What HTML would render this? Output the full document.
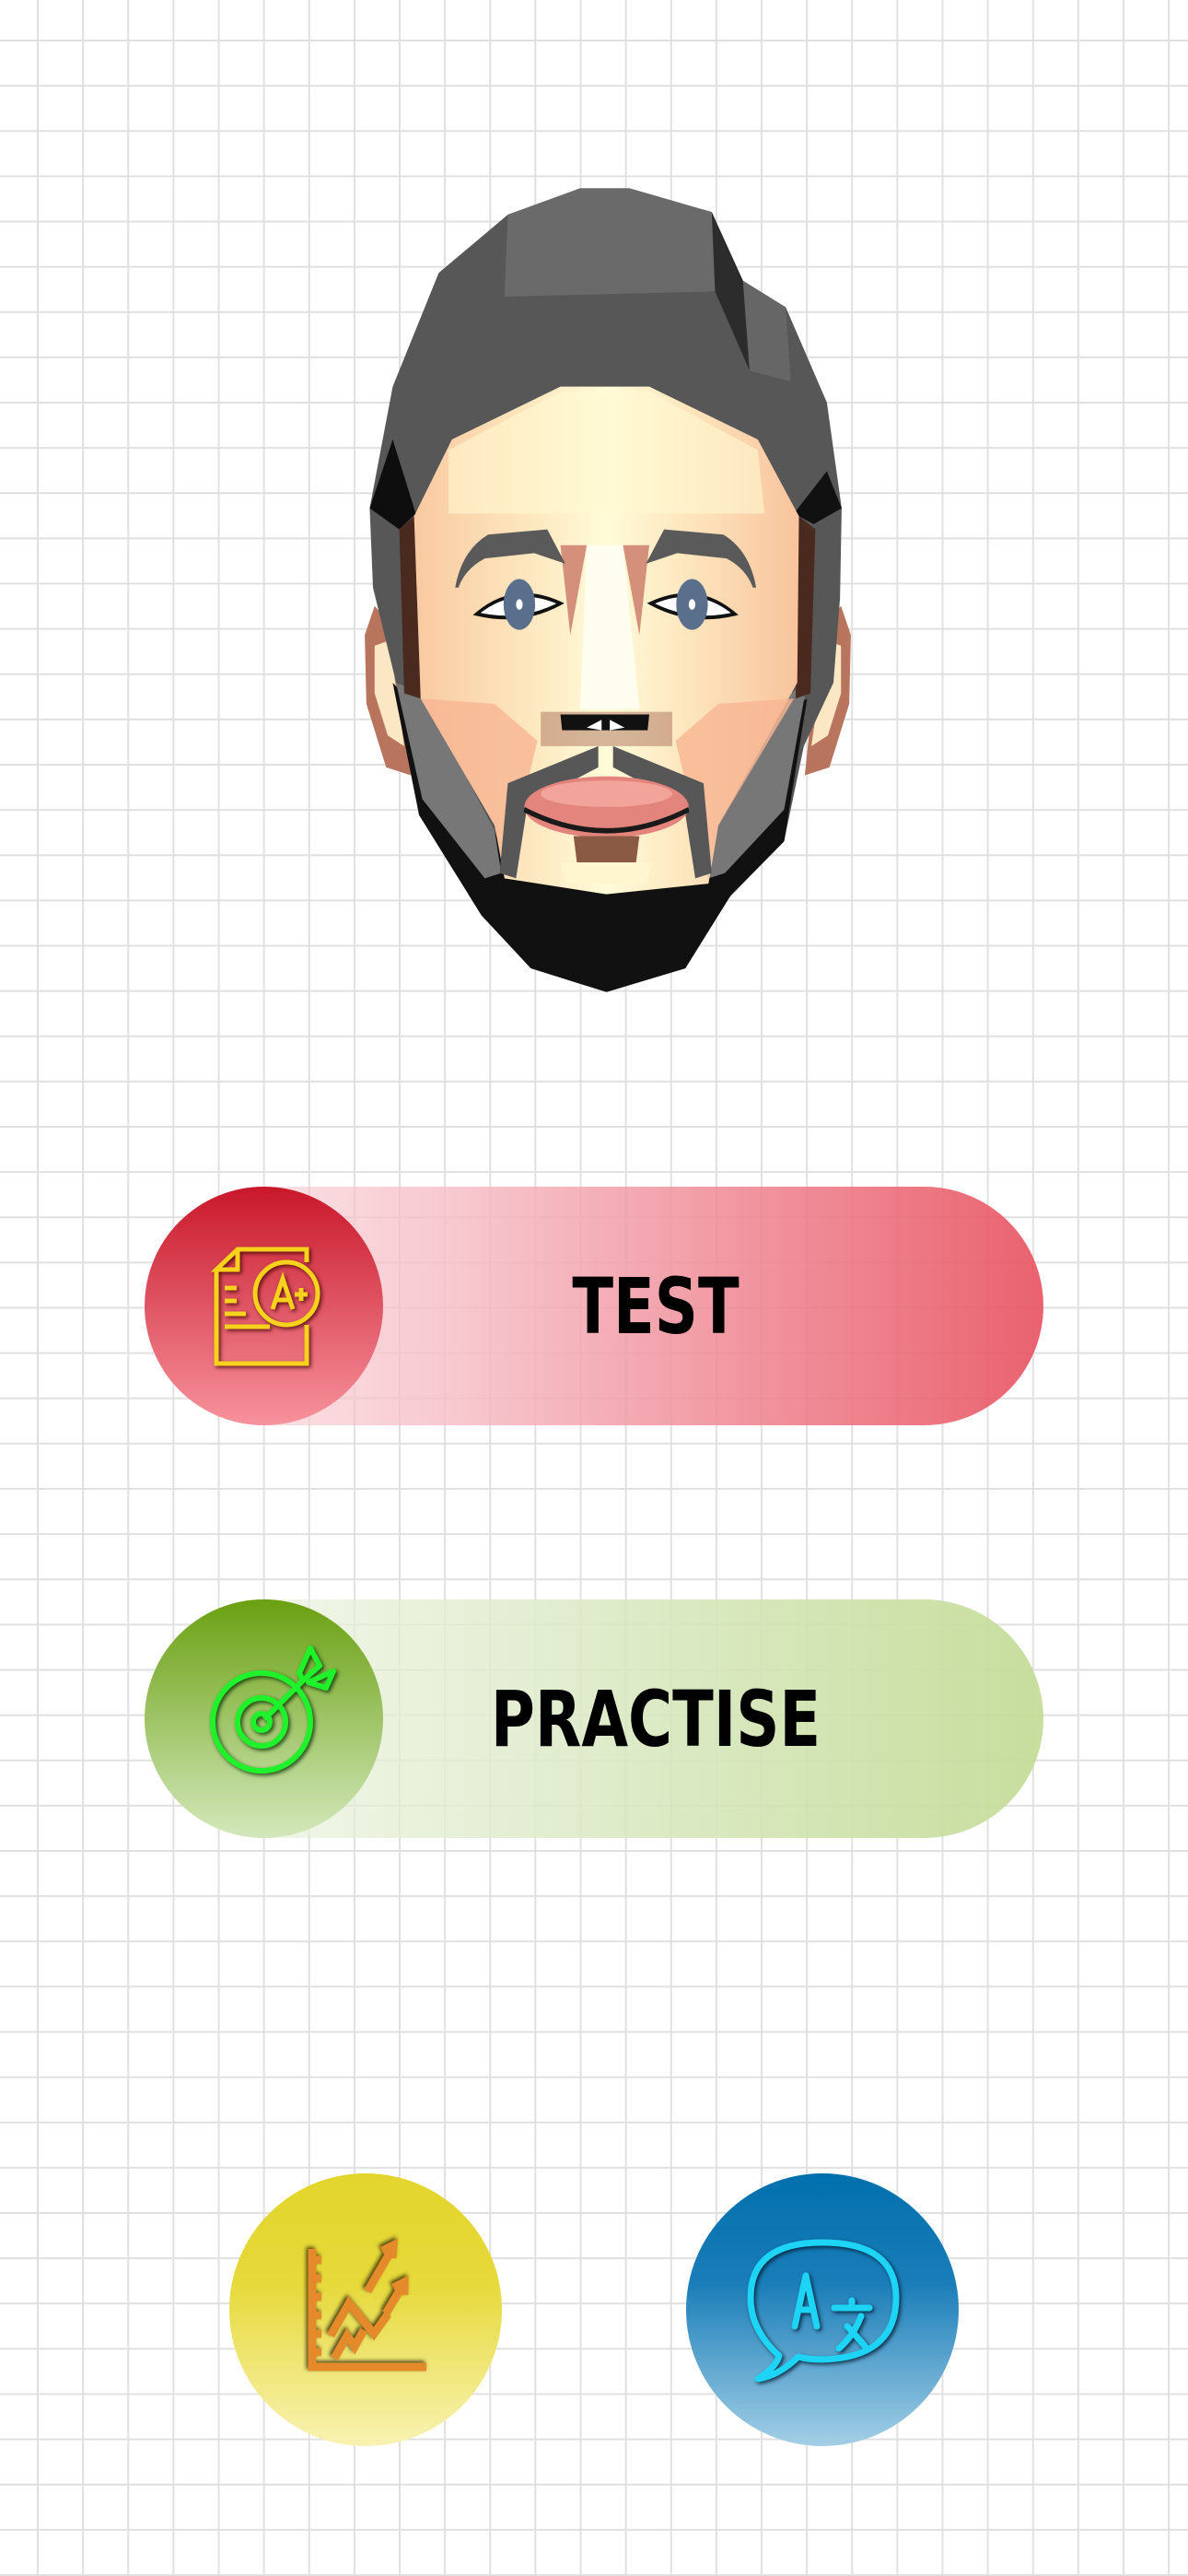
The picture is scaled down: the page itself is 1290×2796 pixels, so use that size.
<!DOCTYPE html>
<html><head><meta charset="utf-8"><style>
html,body{margin:0;padding:0}
body{width:1290px;height:2796px;position:relative;overflow:hidden;background-color:#fff;
background-image:linear-gradient(to right,#e0e0e0 0,#e0e0e0 2px,transparent 2px),linear-gradient(to bottom,#e0e0e0 0,#e0e0e0 2px,transparent 2px);
background-size:49.14px 49.14px;background-position:40px 43px;}
.abs{position:absolute}
.pill{position:absolute;left:157px;width:976px;height:259px;border-radius:130px}
.circ{position:absolute;border-radius:50%}
.lbl{position:absolute;font-family:"DejaVu Sans","Liberation Sans",sans-serif;font-weight:bold;font-size:84px;color:#000;line-height:1;transform:scaleX(0.78);transform-origin:center;white-space:nowrap;text-align:center;width:600px}
</style></head><body>

<svg class="abs" style="left:380px;top:190px" width="560" height="900" viewBox="0 0 1568 1568" preserveAspectRatio="none">
<defs>
<linearGradient id="sk" x1="0" x2="1" y1="0" y2="0">
<stop offset="0" stop-color="#f9c9a0"/><stop offset="0.3" stop-color="#fde7bf"/><stop offset="0.5" stop-color="#fffbd8"/><stop offset="0.7" stop-color="#fde7bf"/><stop offset="1" stop-color="#f8c39c"/></linearGradient>
</defs>
<polygon points="45,870 75,815 140,860 185,1135 110,1120 50,1000" fill="#b8745c"/>
<polygon points="75,890 120,880 165,1080 115,1060 75,980" fill="#fbe7c4"/>
<polygon points="1523,870 1493,815 1428,860 1383,1135 1458,1120 1518,1000" fill="#b8745c"/>
<polygon points="1493,890 1448,880 1403,1080 1453,1060 1493,980" fill="#fbe7c4"/>
<polygon points="270,185 480,75 700,25 850,25 1100,70 1195,200 1325,250 1450,430 1495,630 1490,800 1470,960 1380,1080 1320,1260 1100,1400 1020,1500 780,1545 550,1500 400,1400 210,1210 160,1010 70,780 60,630 130,400" fill="#575757"/>
<polygon points="480,75 700,25 850,25 1100,70 1110,220 470,230" fill="#6a6a6a"/>
<polygon points="1100,70 1195,200 1215,370 1110,220" fill="#2c2c2c"/>
<polygon points="1195,200 1325,250 1340,390 1215,370" fill="#666"/>
<polygon points="60,630 130,500 200,640 150,670" fill="#0e0e0e"/>
<polygon points="1495,630 1450,560 1350,640 1410,660" fill="#111"/>
<polygon points="130,960 210,1210 400,1400 550,1500 780,1545 1020,1500 1160,1360 1320,1260 1390,990 1340,1010 1120,1230 1070,1330 780,1360 490,1330 440,1240 160,980" fill="#111"/>
<polygon points="140,960 220,1180 410,1330 460,1320 440,1240 220,980" fill="#777"/>
<polygon points="1390,960 1320,1200 1140,1320 1090,1330 1120,1230 1340,980" fill="#777"/>
<polygon points="150,670 195,645 215,990 165,980" fill="#4a2a1e"/>
<polygon points="1415,670 1365,645 1355,990 1400,980" fill="#4a2a1e"/>
<polygon points="195,645 310,500 640,400 910,400 1240,500 1365,645 1360,960 1120,1230 1090,1340 780,1360 470,1330 440,1230 215,990" fill="url(#sk)"/>
<polygon points="215,990 440,1000 570,1070 470,1330 440,1230" fill="#f8b592" opacity="0.8"/>
<polygon points="1350,990 1120,1000 990,1070 1090,1330 1120,1230" fill="#f8b592" opacity="0.8"/>
<polygon points="300,520 640,410 910,410 1240,520 1260,640 300,640" fill="#fff8d0" opacity="0.6"/>
<polygon points="720,700 830,700 880,1010 700,1010" fill="#fffdf0"/>
<polygon points="640,700 720,700 670,870" fill="#d4907a"/>
<polygon points="910,700 830,700 880,870" fill="#d4907a"/>
<polygon points="580,1015 980,1015 980,1080 580,1080" fill="#a9705a" opacity="0.5"/>
<polygon points="640,1020 910,1020 905,1050 645,1050" fill="#111"/>
<polygon points="720,1045 765,1030 765,1050" fill="#fff"/>
<polygon points="790,1030 835,1045 790,1050" fill="#fff"/>
<polygon points="480,1150 755,1080 755,1120 540,1190 505,1330 455,1320" fill="#575757"/>
<polygon points="1075,1150 800,1080 800,1120 1015,1190 1050,1330 1100,1320" fill="#575757"/>
<ellipse cx="780" cy="1195" rx="250" ry="58" fill="#e4857d"/>
<ellipse cx="780" cy="1170" rx="200" ry="25" fill="#f2a39a"/>
<path d="M530,1200 Q780,1280 1030,1200" stroke="#1a1a1a" stroke-width="10" fill="none"/>
<polygon points="680,1250 880,1250 870,1300 690,1300" fill="#8a5a45"/>
<polygon points="640,1300 920,1300 900,1340 660,1340" fill="#fff6d0"/>
<path d="M320,780 Q340,710 420,680 L600,670 L655,735 L560,715 L410,725 Q350,745 330,780 Z" fill="#5a5a5a"/>
<path d="M1235,780 Q1215,710 1135,680 L955,670 L900,735 L995,715 L1145,725 Q1205,745 1225,780 Z" fill="#5a5a5a"/>
<path d="M385,830 Q500,770 640,810 Q520,850 385,830 Z" fill="#fff" stroke="#111" stroke-width="7"/>
<circle cx="515" cy="812" r="48" fill="#5a6f8c"/><circle cx="515" cy="812" r="10" fill="#fff"/>
<path d="M1170,830 Q1055,770 915,810 Q1035,850 1170,830 Z" fill="#fff" stroke="#111" stroke-width="7"/>
<circle cx="1040" cy="812" r="48" fill="#5a6f8c"/><circle cx="1040" cy="812" r="10" fill="#fff"/>
</svg>

<div class="pill" style="top:1288px;background:linear-gradient(to right,rgba(248,215,220,0.4) 0%,rgba(246,190,198,0.85) 35%,rgba(232,86,100,0.93) 100%)"></div>
<div class="circ" style="left:157px;top:1288px;width:259px;height:259px;background:linear-gradient(#c8182a,#f7929c)"></div>
<svg class="abs" style="left:157px;top:1288px" width="259" height="259" viewBox="0 0 259 259">
<g fill="none" stroke="#f7d21c" stroke-width="5" style="filter:drop-shadow(2px 2px 2px rgba(60,0,0,.8))">
<path d="M78,90 L78,192 L176,192 L176,150 M176,82 L176,68 L101,68 L78,90 L101,90 L101,68"/>
<circle cx="154" cy="116" r="34"/>
<path d="M139,133 L150,100 L161,133 M143,123 L158,123 M163,117 L177,117 M170,110 L170,124"/>
<path d="M87,110 L100,110 M87,124 L100,124 M87,138 L110,138 M87,152 L136,152"/>
</g></svg>
<div class="lbl" style="left:412px;top:1376px">TEST</div>

<div class="pill" style="top:1736px;background:linear-gradient(to right,rgba(238,245,228,0.5) 0%,rgba(224,236,205,0.85) 40%,rgba(196,220,152,0.95) 100%)"></div>
<div class="circ" style="left:157px;top:1736px;width:259px;height:259px;background:linear-gradient(#6aa012,#d3e8bb)"></div>
<svg class="abs" style="left:157px;top:1736px" width="259" height="259" viewBox="0 0 259 259">
<g fill="none" stroke="#1ff22a" stroke-width="6" stroke-linejoin="round" style="filter:drop-shadow(2px 2px 2px rgba(0,40,0,.8))">
<circle cx="127" cy="133" r="53"/><circle cx="127" cy="133" r="26"/><circle cx="127" cy="133" r="9"/>
<path d="M130,130 L172,88"/>
<path d="M168,80 L180,53 L190,72 L172,88 Z"/>
<path d="M178,90 L205,78 L197,96 L178,90 Z"/>
</g></svg>
<div class="lbl" style="left:412px;top:1824px">PRACTISE</div>

<div class="circ" style="left:249px;top:2359px;width:296px;height:296px;background:linear-gradient(#e3d52c 0%,#e6d93a 40%,#f8f2b2 100%)"></div>
<svg class="abs" style="left:249px;top:2359px" width="296" height="296" viewBox="0 0 296 296">
<g fill="none" stroke="#e58a2a" stroke-width="9" style="filter:drop-shadow(-2px -2px 2px rgba(40,30,0,.8))">
<path d="M90,82 L90,210 L214,210"/>
<path d="M90,94 L100,94 M90,114 L100,114 M90,134 L100,134 M90,154 L100,154 M90,174 L100,174 M90,194 L100,194"/>
<path d="M110,176 L130,141 L157,174 L172,153"/>
<path d="M114,201 L128,176 L136,188 L146,170"/>
<path d="M170,152 L188,122 M178,124 L190,118 L190,132"/>
<path d="M150,128 L178,80 M166,84 L178,78 L177,92"/>
</g></svg>

<div class="circ" style="left:745px;top:2359px;width:296px;height:296px;background:linear-gradient(#0070ad 0%,#1a7db8 40%,#a3cfe6 100%)"></div>
<svg class="abs" style="left:745px;top:2359px" width="296" height="296" viewBox="0 0 296 296">
<g fill="none" stroke="#1dd4f4" stroke-width="7" stroke-linecap="round" stroke-linejoin="round" style="filter:drop-shadow(2px 2px 2px rgba(0,20,40,.8))">
<path d="M101,198 Q70,170 70,135 Q70,75 148,75 Q228,75 228,135 Q228,200 148,202 Q132,202 122,199 Q100,220 78,223 Q98,210 101,198 Z"/>
<path d="M118,166 L130,111 L142,166 M122,148 L138,148"/>
<path d="M161,146 L199,146 M180,138 L180,146 M166,190 Q182,176 190,155 M175,166 Q188,180 197,191"/>
</g></svg>
</body></html>
